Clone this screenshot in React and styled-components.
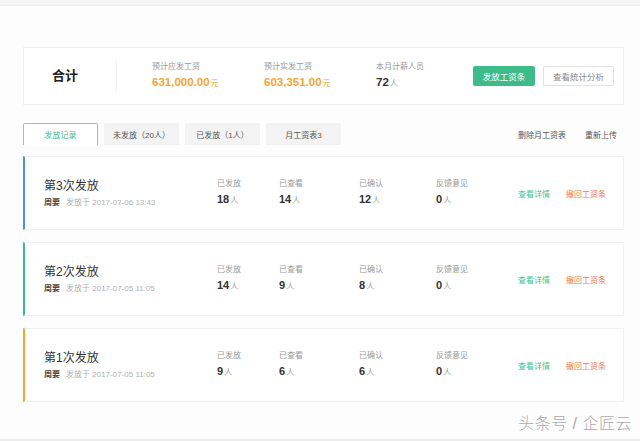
import React from "react";
import styled, { createGlobalStyle } from "styled-components";

const Global = createGlobalStyle`
  html, body { margin: 0; padding: 0; background: #fff; }
  body { font-family: "Liberation Sans", "Noto Sans CJK SC", sans-serif; color: #333; }
`;

const Page = styled.div`
  width: 640px;
  height: 441px;
  box-sizing: border-box;
  background: #fdfdfd;
  border-bottom: 2px solid #ececec;
  display: flex;
  flex-direction: column;
  overflow: hidden;
`;

const TopBar = styled.div`
  height: 5px;
  background: #f4f4f4;
  border-bottom: 1px solid #ededed;
`;

const Main = styled.div`
  padding: 41px 16px 0 23px;
  display: flex;
  flex-direction: column;
`;

const Summary = styled.div`
  height: 58px;
  box-sizing: border-box;
  background: #fff;
  border: 1px solid #f0f0f0;
  display: flex;
  align-items: center;
  padding-right: 9px;
`;

const TotalLabel = styled.div`
  flex: 0 0 93px;
  box-sizing: border-box;
  padding-left: 28px;
  font-size: 13px;
  font-weight: 700;
  color: #222;
  border-right: 1px solid #f2f2f2;
  height: 32px;
  line-height: 32px;
`;

const SumCols = styled.div`
  display: flex;
  padding-left: 35px;
  flex-shrink: 0;
`;

const SumCol = styled.div`
  width: ${(p) => (p.$last ? "auto" : "112px")};
  display: flex;
  flex-direction: column;
  gap: 3px;
`;

const SmallLabel = styled.div`
  font-size: 8px;
  line-height: 10px;
  color: #999;
  white-space: nowrap;
`;

const SumValue = styled.div`
  font-size: 11.5px;
  font-weight: 700;
  line-height: 14px;
  white-space: nowrap;
  color: ${(p) => (p.$orange ? "#f6a531" : "#333")};
`;

const Unit = styled.span`
  font-size: 8px;
  font-weight: 400;
  color: ${(p) => p.$color || "#999"};
  margin-left: 1px;
`;

const Buttons = styled.div`
  margin-left: auto;
  display: flex;
  gap: 8px;
  flex-shrink: 0;
`;

const Button = styled.div`
  height: 20px;
  box-sizing: border-box;
  width: ${(p) => (p.$primary ? "62px" : "71px")};
  display: flex;
  align-items: center;
  justify-content: center;
  white-space: nowrap;
  font-size: 8.5px;
  border-radius: 2px;
  background: ${(p) => (p.$primary ? "#3dbb8b" : "#fff")};
  color: ${(p) => (p.$primary ? "#fff" : "#888")};
  border: 1px solid ${(p) => (p.$primary ? "#3dbb8b" : "#e2e2e2")};
`;

const TabRow = styled.div`
  margin-top: 18px;
  display: flex;
  align-items: center;
  padding-right: 7px;
`;

const Tabs = styled.div`
  display: flex;
  gap: 6px;
`;

const Tab = styled.div`
  width: 75px;
  height: 22px;
  box-sizing: border-box;
  display: flex;
  align-items: center;
  justify-content: center;
  white-space: nowrap;
  font-size: 8px;
  color: ${(p) => (p.$active ? "#3dbb8b" : "#555")};
  background: ${(p) => (p.$active ? "#fff" : "#f3f3f3")};
  border: 1px solid ${(p) => (p.$active ? "#7fd2b1" : "#f3f3f3")};
  border-bottom: none;
  border-radius: 2px 2px 0 0;
`;

const Links = styled.div`
  margin-left: auto;
  display: flex;
  gap: 19px;
`;

const LinkText = styled.span`
  font-size: 8px;
  color: #555;
`;

const List = styled.div`
  margin-top: 11px;
  display: flex;
  flex-direction: column;
  gap: 12px;
`;

const Card = styled.div`
  height: 74px;
  box-sizing: border-box;
  background: #fff;
  border: 1px solid #f0f0f0;
  border-left: 2px solid ${(p) => p.$color};
  display: flex;
  align-items: center;
  padding: 0 17px 0 19px;
`;

const Info = styled.div`
  width: 173px;
  display: flex;
  flex-direction: column;
  gap: 5px;
`;

const Title = styled.div`
  font-size: 12px;
  line-height: 14px;
  color: #333;
`;

const SubRow = styled.div`
  display: flex;
  gap: 6px;
  font-size: 8px;
  line-height: 10px;
`;

const Owner = styled.span`
  font-weight: 700;
  color: #444;
`;

const DateText = styled.span`
  color: #b0b0b0;
`;

const Stat = styled.div`
  width: ${(p) => p.$w}px;
  display: flex;
  flex-direction: column;
  gap: 4px;
`;

const StatValue = styled.div`
  font-size: 11px;
  font-weight: 700;
  line-height: 12px;
  color: #333;
`;

const Actions = styled.div`
  margin-left: auto;
  display: flex;
  gap: 16px;
  font-size: 8px;
`;

const Action = styled.span`
  color: ${(p) => p.$color};
`;

const Footer = styled.div`
  margin-top: auto;
  display: flex;
  justify-content: flex-end;
  padding: 0 8px 5px 0;
`;

const Watermark = styled.span`
  font-size: 16px;
  color: #ababab;
  font-weight: 300;
  letter-spacing: 0.5px;
`;

const records = [
  { title: "第3次发放", date: "2017-07-06 13:43", color: "#4a90e2", stats: [18, 14, 12, 0] },
  { title: "第2次发放", date: "2017-07-05 11:05", color: "#3dbb8b", stats: [14, 9, 8, 0] },
  { title: "第1次发放", date: "2017-07-05 11:05", color: "#f5a623", stats: [9, 6, 6, 0] },
];

const statLabels = [
  { label: "已发放", w: 62 },
  { label: "已查看", w: 80 },
  { label: "已确认", w: 77 },
  { label: "反馈意见", w: 60 },
];

export default function App() {
  return (
    <>
      <Global />
      <Page>
        <TopBar />
        <Main>
          <Summary>
            <TotalLabel>合计</TotalLabel>
            <SumCols>
              <SumCol>
                <SmallLabel>预计应发工资</SmallLabel>
                <SumValue $orange>
                  631,000.00<Unit $color="#f6a531">元</Unit>
                </SumValue>
              </SumCol>
              <SumCol>
                <SmallLabel>预计实发工资</SmallLabel>
                <SumValue $orange>
                  603,351.00<Unit $color="#f6a531">元</Unit>
                </SumValue>
              </SumCol>
              <SumCol $last>
                <SmallLabel>本月计薪人员</SmallLabel>
                <SumValue>
                  72<Unit>人</Unit>
                </SumValue>
              </SumCol>
            </SumCols>
            <Buttons>
              <Button $primary>发放工资条</Button>
              <Button>查看统计分析</Button>
            </Buttons>
          </Summary>

          <TabRow>
            <Tabs>
              <Tab $active>发放记录</Tab>
              <Tab>未发放（20人）</Tab>
              <Tab>已发放（1人）</Tab>
              <Tab>月工资表3</Tab>
            </Tabs>
            <Links>
              <LinkText>删除月工资表</LinkText>
              <LinkText>重新上传</LinkText>
            </Links>
          </TabRow>

          <List>
            {records.map((r) => (
              <Card key={r.title} $color={r.color}>
                <Info>
                  <Title>{r.title}</Title>
                  <SubRow>
                    <Owner>周要</Owner>
                    <DateText>发放于 {r.date}</DateText>
                  </SubRow>
                </Info>
                {statLabels.map((s, i) => (
                  <Stat key={s.label} $w={s.w}>
                    <SmallLabel>{s.label}</SmallLabel>
                    <StatValue>
                      {r.stats[i]}
                      <Unit>人</Unit>
                    </StatValue>
                  </Stat>
                ))}
                <Actions>
                  <Action $color="#3dc591">查看详情</Action>
                  <Action $color="#f27a4e">撤回工资条</Action>
                </Actions>
              </Card>
            ))}
          </List>
        </Main>
        <Footer>
          <Watermark>头条号 / 企匠云</Watermark>
        </Footer>
      </Page>
    </>
  );
}
